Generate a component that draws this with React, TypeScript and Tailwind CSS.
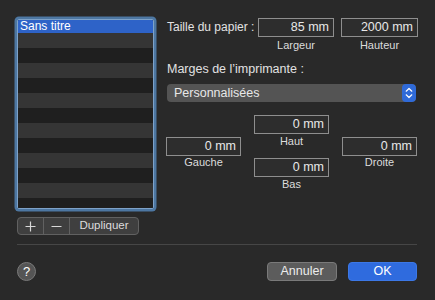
import React from "react";

const font = { fontFamily: '"Liberation Sans", Arial, sans-serif' };

function Field({ value, className = "" }: { value: string; className?: string }) {
  return (
    <div
      className={`h-[19px] border border-[#8e8e8e] bg-[#2d2d2d] text-[#e8e8e8] text-[12.5px] leading-[17px] text-right pr-[4px] whitespace-nowrap ${className}`}
    >
      {value}
    </div>
  );
}

function Caption({ children }: { children: React.ReactNode }) {
  return <div className="text-[11px] leading-[13px] text-[#dcdcdc] text-center">{children}</div>;
}

export default function App() {
  const rows = Array.from({ length: 12 }, (_, i) => i);

  return (
    <div style={font} className="w-[435px] h-[300px] bg-[#292929] overflow-hidden flex flex-col px-[17px] pt-[18px]">
      <div className="flex">
        {/* left: list + buttons */}
        <div className="w-[137px] shrink-0 mt-[1px] flex flex-col">
          <div className="h-[190px] rounded-[2px] border border-[#7ea2c8] shadow-[0_0_0_2.5px_#4d77a2] bg-[#1f1f1f] overflow-hidden flex flex-col">
            <div className="h-[13px] shrink-0 bg-[#2e63c8] text-white text-[12px] leading-[13px] pl-[2px]">Sans titre</div>
            {rows.map((i) => (
              <div key={i} className={`h-[15px] shrink-0 ${i % 2 === 0 ? "bg-[#353535]" : "bg-[#1f1f1f]"}`} />
            ))}
          </div>
          <div className="mt-[8px] h-[18px] w-[122px] flex rounded-[4px] border border-[#616161] bg-[#3f3f3f] overflow-hidden">
            <div className="w-[26px] flex items-center justify-center border-r border-[#616161]">
              <svg width="11" height="11" viewBox="0 0 11 11">
                <path d="M5.5 0.5v10M0.5 5.5h10" stroke="#d8d8d8" strokeWidth="1.2" />
              </svg>
            </div>
            <div className="w-[26px] flex items-center justify-center border-r border-[#616161]">
              <svg width="11" height="11" viewBox="0 0 11 11">
                <path d="M0.5 5.5h10" stroke="#d8d8d8" strokeWidth="1.2" />
              </svg>
            </div>
            <div className="flex-1 flex items-center justify-center text-[11.5px] text-[#dcdcdc]">Dupliquer</div>
          </div>
        </div>

        {/* right: form */}
        <div className="ml-[13px] flex-1 flex flex-col">
          <div className="flex items-center">
            <div className="w-[91px] shrink-0 whitespace-nowrap text-[12px] text-[#e2e2e2] leading-[19px]">Taille du papier :</div>
            <div className="w-[76px] shrink-0">
              <Field value="85 mm" />
            </div>
            <div className="w-[77px] shrink-0 ml-[7px]">
              <Field value="2000 mm" />
            </div>
          </div>
          <div className="flex mt-[2px]">
            <div className="w-[91px] shrink-0" />
            <div className="w-[76px] shrink-0">
              <Caption>Largeur</Caption>
            </div>
            <div className="w-[77px] shrink-0 ml-[7px]">
              <Caption>Hauteur</Caption>
            </div>
          </div>

          <div className="mt-[9px] whitespace-nowrap text-[12.5px] leading-[16px] text-[#e2e2e2]">Marges de l’imprimante :</div>

          <div className="mt-[7px] w-[249px] h-[18px] rounded-[4px] bg-[#545454] flex items-center overflow-hidden">
            <div className="flex-1 pl-[7px] text-[12.5px] text-[#e8e8e8]">Personnalisées</div>
            <div className="w-[14px] h-full bg-[#2f6ad8] rounded-[4px] flex items-center justify-center">
              <svg width="8" height="12" viewBox="0 0 8 12">
                <path d="M1.2 4.2L4 1.5l2.8 2.7M1.2 7.8L4 10.5l2.8-2.7" fill="none" stroke="#fff" strokeWidth="1.2" strokeLinecap="round" strokeLinejoin="round" />
              </svg>
            </div>
          </div>

          <div className="mt-[13px] -ml-[1px] flex items-center">
            <div className="w-[75px] shrink-0 flex flex-col">
              <Field value="0 mm" />
              <Caption>Gauche</Caption>
            </div>
            <div className="w-[75px] shrink-0 ml-[13px] flex flex-col">
              <Field value="0 mm" />
              <div className="mt-[1px]">
                <Caption>Haut</Caption>
              </div>
              <Field value="0 mm" className="mt-[10px]" />
              <div className="mt-[1px]">
                <Caption>Bas</Caption>
              </div>
            </div>
            <div className="w-[75px] shrink-0 ml-[13px] flex flex-col">
              <Field value="0 mm" />
              <Caption>Droite</Caption>
            </div>
          </div>
        </div>
      </div>

      <div className="mt-[9px] h-px w-[400px] bg-[#464646]" />

      <div className="mt-[17px] w-[400px] flex items-center">
        <div className="w-[19px] h-[19px] rounded-full border border-[#7a7a7a] bg-[#555555] flex items-center justify-center text-white text-[13px]">
          ?
        </div>
        <div className="ml-auto w-[70px] h-[19px] rounded-[4px] border border-[#7a7a7a] bg-[#5c5c5c] flex items-center justify-center text-[12.5px] text-[#ececec]">
          Annuler
        </div>
        <div className="ml-[11px] w-[69px] h-[19px] rounded-[4px] bg-[#2f6bde] border border-[#3c78e6] flex items-center justify-center text-[12.5px] text-white">
          OK
        </div>
      </div>
    </div>
  );
}
